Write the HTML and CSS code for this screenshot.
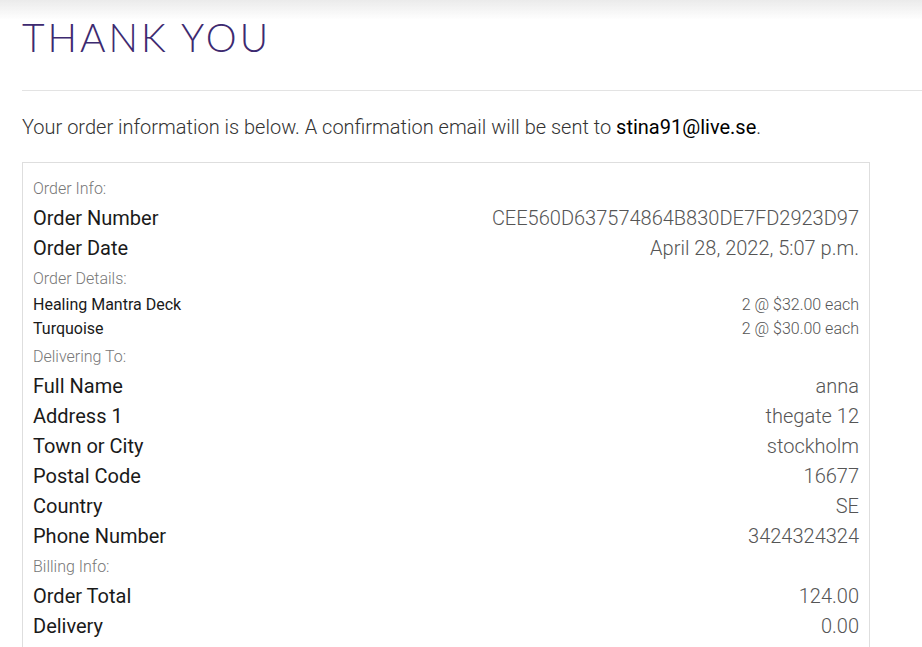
FILE: index.html
```html
<!DOCTYPE html>
<html lang="en">
<head>
<meta charset="utf-8">
<title>Thank You</title>
<link rel="stylesheet" href="styles.css">
</head>
<body>
<div class="topshade"></div>
<main class="page">
  <h1 class="title">THANK YOU</h1>
  <hr class="rule">
  <p class="intro">Your order information is below. A confirmation email will be sent to <strong>stina91@live.se</strong>.</p>
  <section class="order">
    <p class="label">Order Info:</p>
    <div class="row big"><span class="key">Order Number</span><span class="val">CEE560D637574864B830DE7FD2923D97</span></div>
    <div class="row big"><span class="key">Order Date</span><span class="val">April 28, 2022, 5:07 p.m.</span></div>
    <p class="label">Order Details:</p>
    <div class="row small"><span class="key">Healing Mantra Deck</span><span class="val">2 @ $32.00 each</span></div>
    <div class="row small"><span class="key">Turquoise</span><span class="val">2 @ $30.00 each</span></div>
    <p class="label">Delivering To:</p>
    <div class="row big"><span class="key">Full Name</span><span class="val">anna</span></div>
    <div class="row big"><span class="key">Address 1</span><span class="val">thegate 12</span></div>
    <div class="row big"><span class="key">Town or City</span><span class="val">stockholm</span></div>
    <div class="row big"><span class="key">Postal Code</span><span class="val">16677</span></div>
    <div class="row big"><span class="key">Country</span><span class="val">SE</span></div>
    <div class="row big"><span class="key">Phone Number</span><span class="val">3424324324</span></div>
    <p class="label">Billing Info:</p>
    <div class="row big"><span class="key">Order Total</span><span class="val">124.00</span></div>
    <div class="row big"><span class="key">Delivery</span><span class="val">0.00</span></div>
    <div class="row big"><span class="key">Grand Total</span><span class="val">124.00</span></div>
  </section>
</main>
</body>
</html>
```
FILE: styles.css
```css
html, body {
  margin: 0;
  padding: 0;
  background: #fff;
}
body {
  font-family: Roboto, "Liberation Sans", sans-serif;
  color: #222;
  overflow: hidden;
}
.topshade {
  position: fixed;
  top: 0;
  left: 0;
  right: 0;
  height: 20px;
  background: linear-gradient(to bottom, #ebebeb 0%, rgba(255,255,255,0) 100%);
  pointer-events: none;
}
.page {
  padding: 0 0 0 22px;
}
.title {
  margin: 0;
  padding-top: 14px;
  font-family: Lato, "Open Sans", sans-serif;
  font-weight: 300;
  font-size: 39px;
  line-height: 46px;
  letter-spacing: 3px;
  color: #3d2a70;
}
.rule {
  margin: 30px 0 0 0;
  border: 0;
  border-top: 1px solid #e3e3e3;
  height: 0;
}
.intro {
  margin: 21px 0 20px 0;
  font-size: 20px;
  line-height: 30px;
  font-weight: 300;
  color: #333;
}
.intro strong {
  font-weight: 400;
  color: #000;
}
.order {
  width: 826px;
  border: 1px solid #dedede;
  padding: 10px 10px 20px 10px;
}
.label {
  margin: 0;
  padding: 4px 0 2px 0;
  font-size: 16px;
  line-height: 24px;
  font-weight: 300;
  color: #777;
}
.row {
  display: flex;
  justify-content: space-between;
}
.row .val {
  font-weight: 300;
  color: #555;
  text-align: right;
}
.row.big {
  font-size: 20px;
  line-height: 30px;
}
.row.small {
  font-size: 16px;
  line-height: 24px;
}
.row .key {
  color: #1a1a1a;
}
```
